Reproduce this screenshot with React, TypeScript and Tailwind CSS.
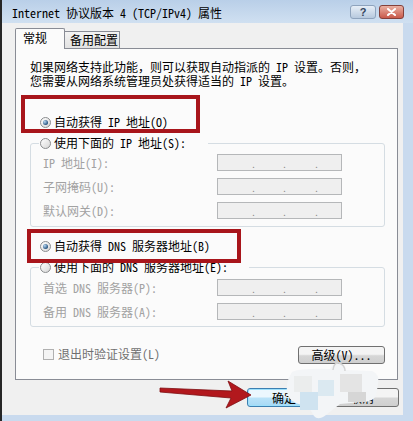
import type { ReactNode } from "react";

function Radio({ checked, children }: { checked?: boolean; children: ReactNode }) {
  return (
    <div className="flex h-[14px] items-center gap-[3px] whitespace-nowrap leading-[14px]">
      <span className="grid h-[11px] w-[11px] shrink-0 place-items-center rounded-full border border-[#8a8c8e] bg-[linear-gradient(135deg,#ffffff,#d6d6d6)]">
        {checked && (
          <span className="h-[5px] w-[5px] rounded-full bg-[radial-gradient(circle_at_35%_35%,#b8d8f3,#1d4b78_75%)]" />
        )}
      </span>
      <span>{children}</span>
    </div>
  );
}

function IpField() {
  return (
    <div className="flex h-[17px] items-end border border-[#b5b7b9] bg-[#efefef] pb-[1px] pl-[33px] text-[10px] leading-[10px] text-[#8a8a8a]">
      <span className="w-[31px]">.</span>
      <span className="w-[32px]">.</span>
      <span>.</span>
    </div>
  );
}

function Row({ label }: { label: string }) {
  return (
    <div className="grid h-[17px] grid-cols-[174px_125px] items-center">
      <span className="whitespace-nowrap leading-[14px] text-[#a2a2a2]">{label}</span>
      <IpField />
    </div>
  );
}

export default function App() {
  return (
    <div className="relative flex h-[421px] w-[413px] flex-col overflow-hidden border-l-2 border-[#262626] bg-[#c9daee] text-[12px] text-black font-['Noto_Sans_Mono_CJK_SC','Noto_Sans_CJK_SC',sans-serif]">
      {/* title bar */}
      <div className="flex h-[23px] shrink-0 items-start justify-between bg-[linear-gradient(#b9cfe8,#d0e0f1)] pl-[10px] pr-[9px]">
        <span className="mt-[6px] whitespace-nowrap leading-[14px]">Internet 协议版本 4 (TCP/IPv4) 属性</span>
        <div className="flex gap-[3px] pt-[5px]">
          <div className="grid h-[14px] w-[26px] place-items-center rounded-[3px] border border-[#8ea3bd] bg-[linear-gradient(#e6eef7,#b7c9de)] font-['Liberation_Sans',sans-serif] text-[11px] font-bold leading-none text-[#34465f]">
            ?
          </div>
          <div className="grid h-[14px] w-[25px] place-items-center rounded-[3px] border border-[#84403a] bg-[linear-gradient(#eab0a2,#c95a4b)]">
            <svg width="11" height="8" viewBox="0 0 11 8">
              <path d="M2 1 L9 7 M9 1 L2 7" stroke="#ffffff" strokeWidth="2" strokeLinecap="round" />
            </svg>
          </div>
        </div>
      </div>

      {/* client area */}
      <div className="mb-[6px] mr-[10px] flex flex-1 flex-col bg-[#f0f0f0]">
        {/* tabs */}
        <div className="flex items-end pl-[13px] pt-[5px]">
          <div className="relative z-10 -mb-px h-[21px] w-[50px] rounded-t-[2px] border border-b-0 border-[#898c95] bg-[#fbfbfb] pl-[7px] pt-[2px] leading-[14px]">
            常规
          </div>
          <div className="flex h-[17px] w-[55px] items-center border-r border-t border-[#898c95] bg-[linear-gradient(#f3f3f3,#e2e2e2)] pl-[5px] leading-[14px]">
            备用配置
          </div>
        </div>

        {/* panel */}
        <div className="ml-[13px] mr-[5px] flex h-[332px] flex-col border border-[#898c95] bg-[#fbfbfb]">
          <div className="whitespace-nowrap pl-[14px] pt-[11px] leading-[14px]">
            如果网络支持此功能，则可以获取自动指派的 IP 设置。否则，
            <br />
            您需要从网络系统管理员处获得适当的 IP 设置。
          </div>

          <div className="mt-[27px] pl-[24px]">
            <Radio checked>自动获得 IP 地址(O)</Radio>
          </div>

          <fieldset className="ml-[14px] mr-[12px] mt-[7px] rounded-[3px] border border-[#d5dde3] pb-[7px] pt-[4px]">
            <legend className="ml-[8px] pl-[1px] pr-[22px]">
              <Radio>使用下面的 IP 地址(S):</Radio>
            </legend>
            <div className="flex flex-col gap-[7px] pl-[12px]">
              <Row label="IP 地址(I):" />
              <Row label="子网掩码(U):" />
              <Row label="默认网关(D):" />
            </div>
          </fieldset>

          <div className="mt-[12px] pl-[24px]">
            <Radio checked>自动获得 DNS 服务器地址(B)</Radio>
          </div>

          <fieldset className="ml-[14px] mr-[12px] mt-[7px] rounded-[3px] border border-[#d5dde3] pb-[6px] pt-[5px]">
            <legend className="ml-[8px] pl-[1px] pr-[21px]">
              <Radio>使用下面的 DNS 服务器地址(E):</Radio>
            </legend>
            <div className="flex flex-col gap-[7px] pl-[12px]">
              <Row label="首选 DNS 服务器(P):" />
              <Row label="备用 DNS 服务器(A):" />
            </div>
          </fieldset>

          <div className="mr-[12px] mt-[19px] flex items-start justify-between pl-[27px]">
            <div className="mt-[1px] flex items-center gap-[4px] leading-[14px] text-[#707070]">
              <span className="h-[11px] w-[11px] border border-[#b0b0b0] bg-[#f4f4f4]" />
              <span className="whitespace-nowrap">退出时验证设置(L)</span>
            </div>
            <button className="h-[18px] w-[87px] rounded-[3px] border border-[#707070] bg-[linear-gradient(#f4f4f4_45%,#d6d6d6_55%,#cfcfcf)] leading-[14px]">
              高级(V)...
            </button>
          </div>
        </div>

        {/* dialog buttons */}
        <div className="mt-[8px] flex justify-end gap-[4px] pr-[4px]">
          <button className="h-[19px] w-[74px] rounded-[3px] border border-[#3c7fb1] bg-[linear-gradient(#ebf7fe_45%,#b9e2f8_55%,#a7d9f5)] leading-[14px] shadow-[inset_0_0_0_1px_#9de0fb]">
            确定
          </button>
          <button className="h-[19px] w-[74px] rounded-[3px] border border-[#707070] bg-[linear-gradient(#f4f4f4_45%,#d6d6d6_55%,#cfcfcf)] leading-[14px]">
            取消
          </button>
        </div>
      </div>

      {/* red highlight boxes */}
      <div className="absolute left-[19px] top-[95px] h-[38px] w-[179px] border-4 border-[#a8151b]" />
      <div className="absolute left-[25px] top-[229px] h-[34px] w-[214px] border-4 border-[#a8151b]" />

      {/* red arrow */}
      <svg className="absolute left-[153px] top-[378px]" width="100" height="34" viewBox="155 378 100 34">
        <path
          d="M160 388 L232 391 L228 381 L251 395 L226 408 L231 398 L160 392 Z"
          fill="#b2181d"
          stroke="#7e0d10"
          strokeWidth="0.8"
          strokeLinejoin="round"
        />
      </svg>

      {/* watermark smudge */}
      <svg className="absolute left-[281px] top-[362px]" width="100" height="59" viewBox="283 362 100 59">
        <path
          d="M292 372 Q300 368 330 369 Q334 362 340 364 Q344 367 346 370 L372 371 Q380 374 378 384 L376 396 Q372 402 362 402 L340 404 L326 415 Q318 421 314 416 L308 406 Q292 404 288 396 Q284 384 292 372 Z"
          fill="#f3f5f7"
        />
        <rect x="294" y="376" width="18" height="16" fill="#ebeded" />
        <rect x="318" y="380" width="16" height="16" fill="#dbe9f1" />
        <rect x="300" y="392" width="18" height="18" fill="#cfe3f0" />
        <rect x="340" y="374" width="22" height="18" fill="#e4e4e4" />
        <rect x="348" y="392" width="18" height="10" fill="#d6d6d6" />
        <path d="M333 370 Q334 362 339 363 Q345 365 345 371" fill="none" stroke="#d4d4d4" strokeWidth="1.5" />
      </svg>
    </div>
  );
}
